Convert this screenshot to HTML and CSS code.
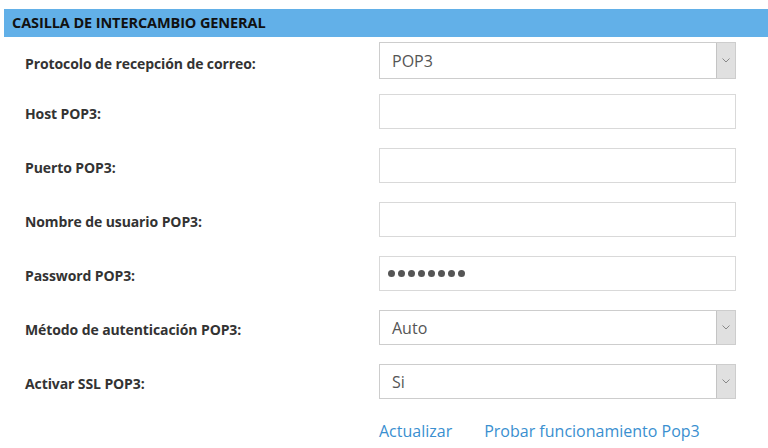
FILE: index.html
```html
<!DOCTYPE html>
<html lang="es">
<head>
<meta charset="utf-8">
<link rel="stylesheet" href="styles.css">
</head>
<body>
<div class="panel">
  <div class="panel-header">CASILLA DE INTERCAMBIO GENERAL</div>
  <div class="form">
    <div class="row first">
      <label class="label">Protocolo de recepción de correo:</label>
      <div class="select"><span class="value">POP3</span><span class="arrow"><svg width="8" height="5" viewBox="0 0 8 5"><path d="M0.5 0.5 L4 4 L7.5 0.5" fill="none" stroke="#888" stroke-width="1"/></svg></span></div>
    </div>
    <div class="row">
      <label class="label">Host POP3:</label>
      <div class="input"></div>
    </div>
    <div class="row">
      <label class="label">Puerto POP3:</label>
      <div class="input"></div>
    </div>
    <div class="row">
      <label class="label">Nombre de usuario POP3:</label>
      <div class="input"></div>
    </div>
    <div class="row">
      <label class="label">Password POP3:</label>
      <div class="input"><span class="dots"><i></i><i></i><i></i><i></i><i></i><i></i><i></i><i></i></span></div>
    </div>
    <div class="row">
      <label class="label">Método de autenticación POP3:</label>
      <div class="select"><span class="value">Auto</span><span class="arrow"><svg width="8" height="5" viewBox="0 0 8 5"><path d="M0.5 0.5 L4 4 L7.5 0.5" fill="none" stroke="#888" stroke-width="1"/></svg></span></div>
    </div>
    <div class="row">
      <label class="label">Activar SSL POP3:</label>
      <div class="select"><span class="value">Si</span><span class="arrow"><svg width="8" height="5" viewBox="0 0 8 5"><path d="M0.5 0.5 L4 4 L7.5 0.5" fill="none" stroke="#888" stroke-width="1"/></svg></span></div>
    </div>
    <div class="actions">
      <a class="link" href="#">Actualizar</a>
      <a class="link" href="#">Probar funcionamiento Pop3</a>
    </div>
  </div>
</div>
</body>
</html>
```
FILE: styles.css
```css
* { box-sizing: border-box; }
html, body { margin: 0; padding: 0; background: #fff; }
body {
  font-family: "Open Sans", "Noto Sans", "Liberation Sans", sans-serif;
  color: #333;
  overflow: hidden;
}
.panel { padding: 9px 0 0 4px; }
.panel-header {
  height: 28px;
  background: #62b0e8;
  color: #111;
  font-weight: 700;
  font-size: 14.5px;
  line-height: 28px;
  padding-left: 8px;
  letter-spacing: -0.1px;
}
.form { padding: 5px 32px 0 21px; }
.row {
  display: grid;
  grid-template-columns: 354px 357px;
  align-items: start;
  height: 54px;
}
.row.first { height: 52px; }
.label {
  font-weight: 700;
  font-size: 14px;
  line-height: 19px;
  color: #333;
  padding-top: 10px;
  letter-spacing: -0.1px;
}
.row.first .label { padding-top: 12px; }
.input, .select {
  height: 35px;
  border: 1px solid #d9d9d9;
  background: #fff;
  display: flex;
  align-items: center;
  padding-left: 12px;
  font-size: 16px;
  color: #555;
}
.row.first .select { height: 37px; }
.select {
  justify-content: space-between;
  padding-right: 0;
  border-color: #cdcdcd;
}
.select .arrow {
  width: 19px;
  align-self: stretch;
  background: #e0e0e0;
  border-left: 1px solid #c4c4c4;
  display: flex;
  align-items: center;
  justify-content: center;
}
.dots { display: flex; gap: 3px; margin-left: -4px; }
.dots i { display: block; width: 7px; height: 7px; border-radius: 50%; background: #555; }
.actions {
  display: flex;
  gap: 32px;
  padding-left: 354px;
  padding-top: 2px;
}
.link {
  color: #3a8fd0;
  text-decoration: none;
  font-size: 16px;
  line-height: 22px;
}
```
